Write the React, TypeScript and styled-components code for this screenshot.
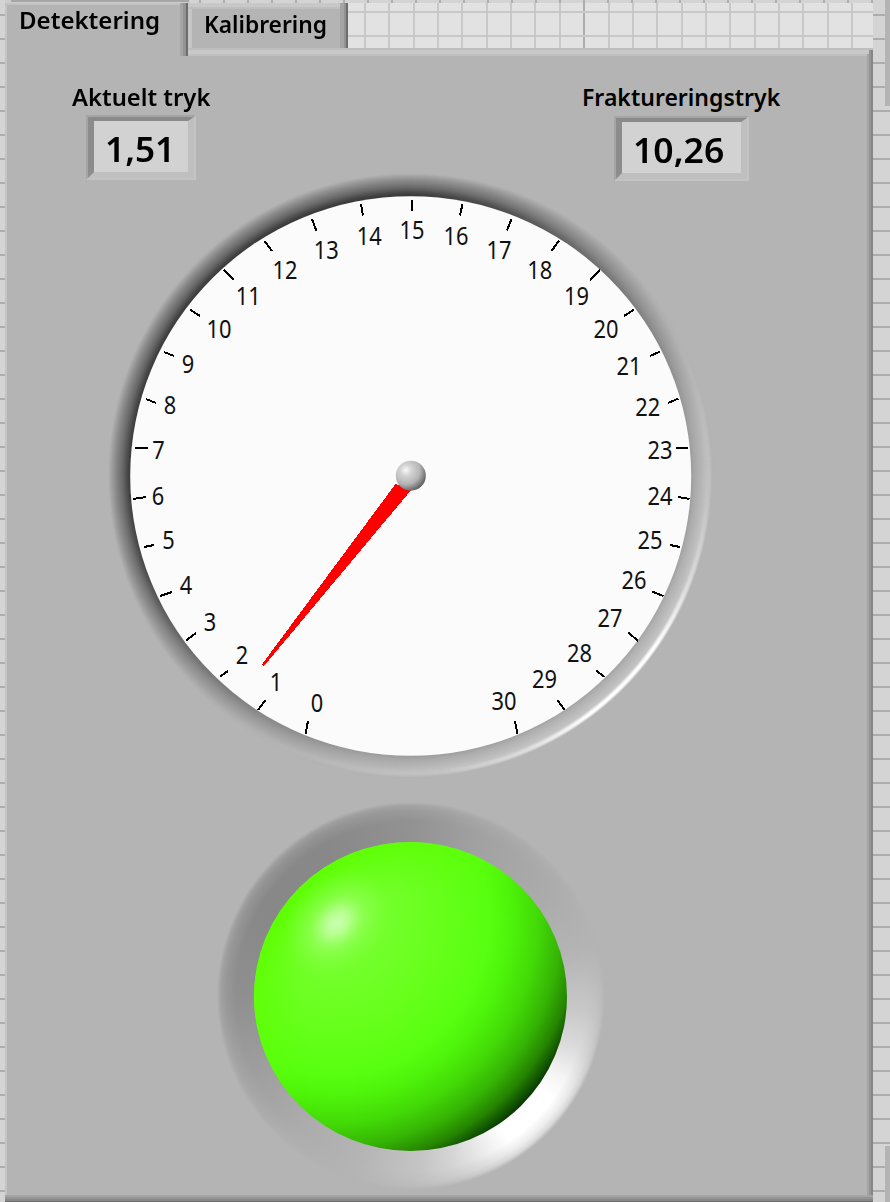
import React from "react";
import styled, { createGlobalStyle } from "styled-components";

const SANS = '"Noto Sans", "Open Sans", sans-serif';

const GlobalStyle = createGlobalStyle`
  html, body { margin: 0; padding: 0; background: #d4d4d4; }
  *, *::before, *::after { box-sizing: border-box; }
`;

const Page = styled.main`
  width: 890px;
  height: 1202px;
  overflow: hidden;
  display: flex;
  font-family: ${SANS};
  color: #000;
  background: repeating-linear-gradient(to bottom, #d4d4d4 0 14px, #adadad 14px 16px, #d4d4d4 16px 24px);
`;

const Window = styled.div`
  width: 868px;
  margin-left: 5px;
  display: flex;
  flex-direction: column;
`;

const TopEdge = styled.div`
  height: 3px;
  flex: none;
  background:
    linear-gradient(#a6a6a6, #a6a6a6) 6px 0 / 178px 2px no-repeat,
    linear-gradient(#cdcdcd, #cdcdcd) 0 0 / 185px 3px no-repeat,
    repeating-linear-gradient(to right, #d4d4d4 0 2px, #adadad 2px 4px, #d4d4d4 4px 24px);
`;

const TabRow = styled.div`
  height: 45px;
  flex: none;
  display: flex;
  align-items: flex-start;
`;

const Tab = styled.div<{ $active?: boolean }>`
  position: relative;
  z-index: ${(p) => (p.$active ? 2 : 0)};
  width: ${(p) => (p.$active ? 183 : 160)}px;
  height: ${(p) => (p.$active ? 53 : 45)}px;
  flex: none;
  padding: ${(p) => (p.$active ? "0 0 0 14px" : "4px 0 0 16px")};
  background: #b4b4b4;
  box-shadow: ${(p) =>
    p.$active
      ? "inset -2px 0 #6d6d6d, inset -5px 0 #939393, inset -8px 0 #a5a5a5, inset 0 2px #c2c2c2, inset 2px 0 #c4c4c4"
      : "inset -2px 0 #6d6d6d, inset -4px 0 #939393, inset -8px 0 #a5a5a5, inset 0 4px #c8c8c8, inset 0 6px #bebebe, inset 4px 0 #c6c6c6"};
`;

const Caption = styled.span<{ $stretch: number }>`
  display: block;
  width: max-content;
  font-size: 23px;
  line-height: 34px;
  font-weight: 600;
  white-space: nowrap;
  transform: scaleX(${(p) => p.$stretch});
  transform-origin: 0 50%;
`;

const Paper = styled.svg`
  display: block;
  flex: none;
`;

const Panel = styled.section`
  position: relative;
  height: 1154px;
  flex: none;
  padding-top: 32px;
  background: #b4b4b4;
  box-shadow:
    inset 0 -1px #6c6c6c, inset 0 -3px #888, inset 0 -5px #959595, inset 0 -7px #a4a4a4,
    inset 0 2px #bebebe, inset -2px 0 #868686, inset -4px 0 #959595, inset 0 6px #c8c8c8,
    inset -6px 0 #a5a5a5, inset 0 8px #c0c0c0, inset 2px 0 #c4c4c4;
`;

const Readings = styled.div`
  height: 93px;
  padding: 0 91px 0 67px;
  display: flex;
  justify-content: space-between;
`;

const Reading = styled.div<{ $width: number }>`
  width: ${(p) => p.$width}px;
`;

const Field = styled.div<{ $width: number; $left: number; $top: number }>`
  width: ${(p) => p.$width}px;
  height: 65px;
  margin: ${(p) => p.$top}px 0 0 ${(p) => p.$left}px;
  border: 2px solid;
  border-color: #a5a5a5 #c3c3c3 #c3c3c3 #a5a5a5;
`;

const FieldInner = styled.div`
  height: 100%;
  border: 6px solid;
  border-top-width: 4px;
  border-color: #8a8a8a #bfbfbf #bfbfbf #8c8c8c;
  background: #d2d2d2;
  padding-left: 11px;
`;

const Value = styled.span<{ $stretch: number }>`
  display: block;
  width: max-content;
  font-size: 34.5px;
  line-height: 55px;
  font-weight: 600;
  transform: scaleX(${(p) => p.$stretch});
  transform-origin: 0 50%;
`;

const Dial = styled.div`
  position: relative;
  width: 605px;
  height: 605px;
  margin-left: 103px;
`;

const Layer = styled.div<{ $fill: string; $mask: string }>`
  position: absolute;
  inset: 0;
  border-radius: 50%;
  background: ${(p) => p.$fill};
  mask-image: ${(p) => p.$mask};
`;

const Face = styled.svg`
  position: absolute;
  inset: 0;
  display: block;
`;

const Lamp = styled.div`
  position: relative;
  width: 390px;
  height: 390px;
  margin: 23px 0 0 211px;
`;

const SideStrip = styled.div`
  width: 17px;
  padding-left: 12px;
  display: flex;
  flex-direction: column;
  justify-content: space-between;
`;

const Strip = styled.div<{ $height: number }>`
  height: ${(p) => p.$height}px;
  background: #b4b4b4;
`;

/* value, label centre x/y, tick from x/y to x/y */
const SCALE: number[][] = [
  [0, 317, 703, 305.5, 734, 308, 721],
  [1, 276, 682, 258, 710, 265.5, 700],
  [2, 242, 654.5, 220, 676.5, 228, 671],
  [3, 210, 621.7, 186, 640.5, 196, 633],
  [4, 186, 584.7, 160, 596, 172, 592],
  [5, 168.5, 539.5, 144, 547, 154, 545],
  [6, 158, 495.5, 133, 499, 146, 497],
  [7, 158.5, 450, 135, 448, 148, 448],
  [8, 170, 405, 146, 399, 156, 403],
  [9, 188, 364, 164, 352, 174, 356],
  [10, 219, 328.5, 190, 309.5, 200, 316],
  [11, 248.3, 296, 224, 270, 234, 280],
  [12, 285, 269.5, 264.5, 241, 272, 251],
  [13, 326.3, 249.7, 312, 219, 316.5, 231],
  [14, 369.3, 235.7, 361, 204, 363, 215.5],
  [15, 412, 230, 412, 200, 412, 211],
  [16, 456, 235.7, 462.5, 204, 460, 215.5],
  [17, 499, 249.7, 511.5, 219, 507, 230.5],
  [18, 539.7, 269.5, 559, 240.5, 551.5, 251],
  [19, 576.5, 296, 600, 269.5, 590, 280.5],
  [20, 606, 328.5, 634, 309.5, 624, 316],
  [21, 629, 366, 660, 351.5, 650, 356],
  [22, 647.7, 407, 678.5, 398.5, 668, 403],
  [23, 660, 450.3, 688, 448, 676, 448],
  [24, 660, 495.5, 689.5, 499, 678, 497],
  [25, 650, 539.5, 680, 547, 670, 545],
  [26, 634, 580, 663.5, 596, 652, 591.5],
  [27, 610, 617.5, 638, 641, 628.5, 632.5],
  [28, 579.5, 652.5, 604.5, 677, 596, 670.5],
  [29, 544.5, 678.5, 564.5, 710, 557.5, 700],
  [30, 504, 700.5, 517.5, 734, 515, 721],
];

const COLUMNS = Array.from({ length: 21 }, (_, i) => Math.round(16 + i * 24.35));

function GridPaper() {
  return (
    <Paper width="525" height="45" shapeRendering="crispEdges">
      <rect width="525" height="45" fill="#e2e2e2" />
      {COLUMNS.map((x, i) => (
        <rect key={x} x={x} width="2" height="45" fill={i === 9 ? "#adadad" : "#c8c8c8"} />
      ))}
      <rect y="8" width="525" height="2" fill="#c8c8c8" />
      <rect y="32" width="525" height="2" fill="#c8c8c8" />
    </Paper>
  );
}

function Gauge() {
  return (
    <Dial>
      <Layer
        $fill="radial-gradient(circle, #a2a2a2 280px, #b0b0b0 284px, #bdbdbd 291px, #c9c9c9 297px, #c6c6c6 299px, #b4b4b4 302px)"
        $mask="conic-gradient(transparent 0deg, rgba(0,0,0,.1) 45deg, #000 100deg, #000 170deg, rgba(0,0,0,.1) 225deg, transparent 270deg)"
      />
      <Layer
        $fill="radial-gradient(circle, transparent 294.5px, #fff 297.5px, #fff 299px, transparent 301.5px)"
        $mask="conic-gradient(transparent 95deg, rgba(0,0,0,.4) 112deg, #000 125deg, #000 143deg, rgba(0,0,0,.4) 157deg, transparent 175deg)"
      />
      <Layer
        $fill="radial-gradient(circle, #383838 279px, #424242 282px, #686868 288px, #8a8a8a 295px, #a0a0a0 299px, #b2b2b2 302px)"
        $mask="conic-gradient(#000 0deg, rgba(0,0,0,.85) 18deg, rgba(0,0,0,.5) 45deg, rgba(0,0,0,.12) 80deg, transparent 115deg, transparent 155deg, rgba(0,0,0,.12) 190deg, rgba(0,0,0,.5) 225deg, rgba(0,0,0,.9) 252deg, #000 270deg)"
      />
      <Face width="605" height="605" viewBox="108 173 605 605">
        <defs>
          <radialGradient id="hub" cx="0.34" cy="0.32" r="0.72">
            <stop offset="0" stopColor="#fafafa" />
            <stop offset="0.25" stopColor="#d4d4d4" />
            <stop offset="0.65" stopColor="#b4b4b4" />
            <stop offset="1" stopColor="#606060" />
          </radialGradient>
        </defs>
        <ellipse cx="410.7" cy="476" rx="280.5" ry="279.8" fill="#fbfbfb" />
        <g stroke="#000" strokeWidth="2" shapeRendering="crispEdges">
          {SCALE.map(([v, , , x1, y1, x2, y2]) => (
            <line key={v} x1={x1} y1={y1} x2={x2} y2={y2} />
          ))}
        </g>
        <g fontFamily={SANS} fontSize="25" fill="#111" textAnchor="middle">
          {SCALE.map(([v, x, y]) => (
            <text
              key={v}
              x={x}
              y={y + 9}
              textLength={v < 10 ? 12.5 : 25}
              lengthAdjust="spacingAndGlyphs"
            >
              {v}
            </text>
          ))}
        </g>
        <polygon points="261.5,665 264,666 412,489 395.5,484" fill="#f00" shapeRendering="crispEdges" />
        <circle cx="410.8" cy="475.7" r="15" fill="url(#hub)" />
      </Face>
    </Dial>
  );
}

function StatusLamp() {
  return (
    <Lamp>
      <Layer
        $fill="conic-gradient(#929292 0deg, #a2a2a2 25deg, #acacac 55deg, #b4b4b4 75deg, #c8c8c8 95deg, #dcdcdc 108deg, #f4f4f4 118deg, #fff 126deg, #fff 146deg, #f0f0f0 153deg, #d6d6d6 165deg, #c4c4c4 177deg, #b4b4b4 198deg, #acacac 220deg, #9e9e9e 245deg, #8f8f8f 270deg, #888 300deg, #888 330deg, #929292 360deg)"
        $mask="radial-gradient(circle, #000 175px, rgba(0,0,0,.75) 185px, rgba(0,0,0,.5) 190px, transparent 194px)"
      />
      <Face width="390" height="390" viewBox="216 801 390 390">
        <defs>
          <radialGradient id="ball" gradientUnits="userSpaceOnUse" cx="332" cy="918" r="270">
            <stop offset="0" stopColor="#80ff40" />
            <stop offset="0.2" stopColor="#74ff2c" />
            <stop offset="0.42" stopColor="#66ff1a" />
            <stop offset="0.58" stopColor="#58ff10" />
            <stop offset="0.66" stopColor="#4ef40a" />
            <stop offset="0.76" stopColor="#43da07" />
            <stop offset="0.85" stopColor="#35b404" />
            <stop offset="0.92" stopColor="#258400" />
            <stop offset="1" stopColor="#012800" />
          </radialGradient>
          <radialGradient id="rimGlow" gradientUnits="userSpaceOnUse" cx="425" cy="1010" r="200">
            <stop offset="0.6" stopColor="#5cff00" stopOpacity="0" />
            <stop offset="0.87" stopColor="#5cff00" stopOpacity="1" />
          </radialGradient>
          <linearGradient id="glowFade" gradientUnits="userSpaceOnUse" x1="300" y1="886" x2="420" y2="1006">
            <stop offset="0" stopColor="#fff" />
            <stop offset="1" stopColor="#fff" stopOpacity="0" />
          </linearGradient>
          <mask id="upperLeft">
            <rect x="216" y="801" width="390" height="390" fill="url(#glowFade)" />
          </mask>
          <radialGradient
            id="shine"
            gradientUnits="userSpaceOnUse"
            cx="0"
            cy="0"
            r="62"
            gradientTransform="translate(337 923) rotate(-45) scale(1 .75)"
          >
            <stop offset="0" stopColor="#ccffb4" />
            <stop offset="0.22" stopColor="#bcff98" stopOpacity="0.9" />
            <stop offset="0.5" stopColor="#98ff60" stopOpacity="0.55" />
            <stop offset="1" stopColor="#80ff3c" stopOpacity="0" />
          </radialGradient>
        </defs>
        <ellipse cx="410.5" cy="996.5" rx="156.5" ry="154.5" fill="url(#ball)" />
        <ellipse cx="410.5" cy="996.5" rx="156.5" ry="154.5" fill="url(#rimGlow)" mask="url(#upperLeft)" />
        <circle cx="337" cy="923" r="64" fill="url(#shine)" />
      </Face>
    </Lamp>
  );
}

export default function App() {
  return (
    <>
      <GlobalStyle />
      <Page>
        <Window>
          <TopEdge />
          <TabRow>
            <Tab $active>
              <Caption $stretch={1.045}>Detektering</Caption>
            </Tab>
            <Tab>
              <Caption $stretch={0.99}>Kalibrering</Caption>
            </Tab>
            <GridPaper />
          </TabRow>
          <Panel>
            <Readings>
              <Reading $width={140}>
                <Caption $stretch={1.035}>Aktuelt tryk</Caption>
                <Field $width={110} $left={14} $top={1}>
                  <FieldInner>
                    <Value $stretch={1.02}>1,51</Value>
                  </FieldInner>
                </Field>
              </Reading>
              <Reading $width={200}>
                <Caption $stretch={1}>Fraktureringstryk</Caption>
                <Field $width={135} $left={32} $top={2}>
                  <FieldInner>
                    <Value $stretch={1.03}>10,26</Value>
                  </FieldInner>
                </Field>
              </Reading>
            </Readings>
            <Gauge />
            <StatusLamp />
          </Panel>
        </Window>
        <SideStrip>
          <Strip $height={106} />
          <Strip $height={56} />
        </SideStrip>
      </Page>
    </>
  );
}
